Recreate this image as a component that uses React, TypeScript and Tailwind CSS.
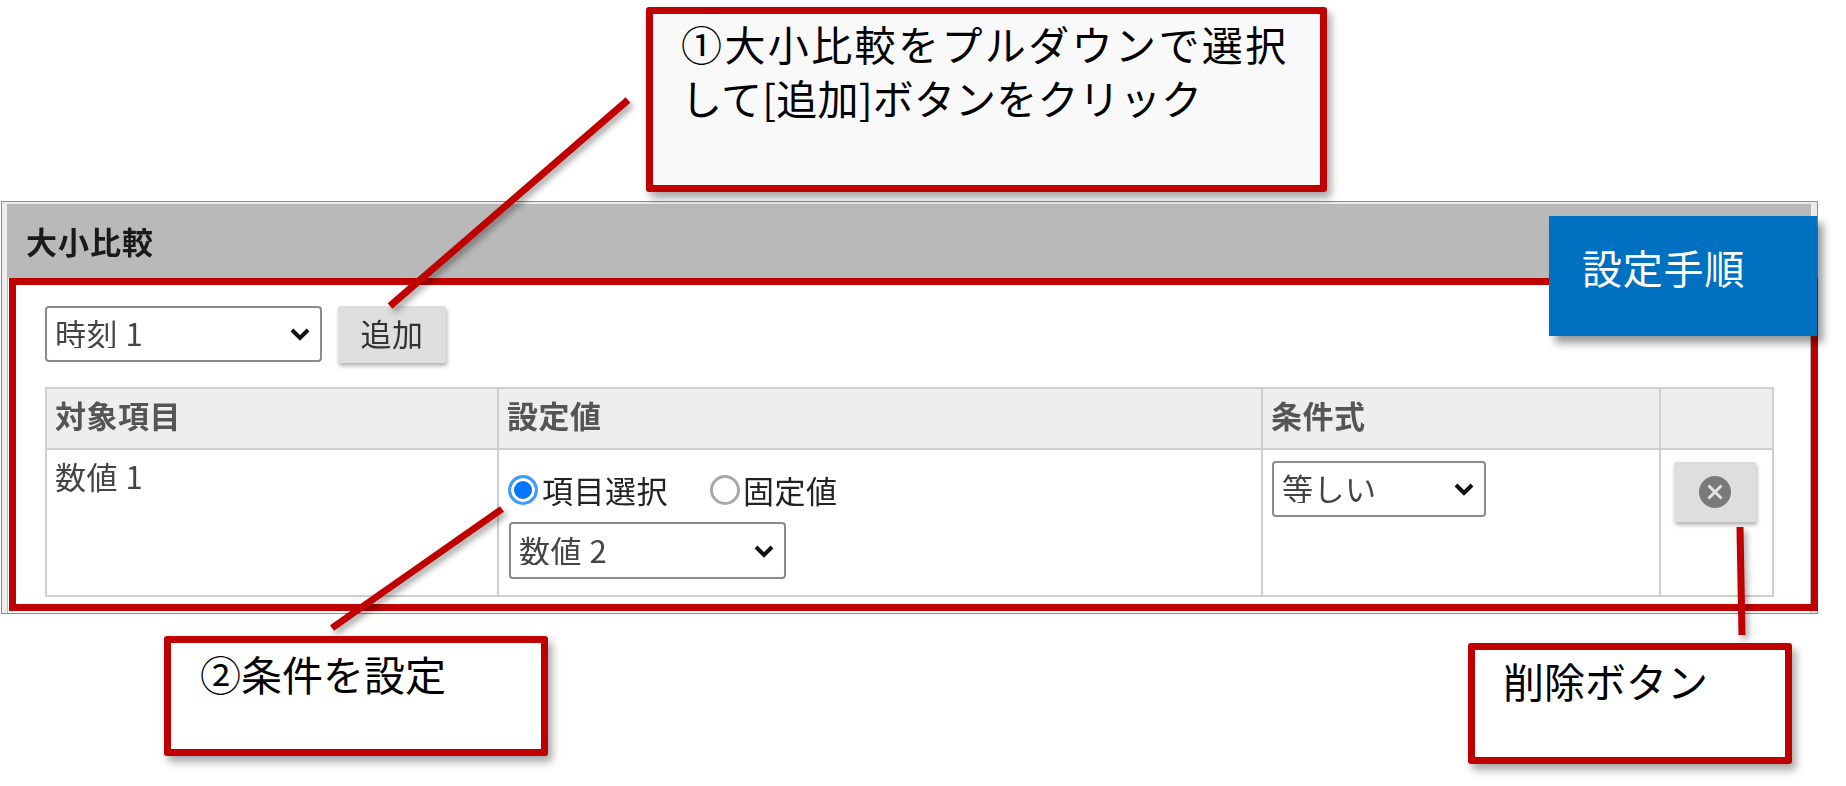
// Annotated manual figure: the 大小比較 settings panel with red callouts on top.
import type { ReactNode } from 'react';

function Chevron() {
  return (
    <svg
      viewBox="0 0 20 14"
      className="absolute right-[12px] top-1/2 h-[14px] w-[20px] -translate-y-1/2 pointer-events-none"
    >
      <path d="M2 3 L10 11 L18 3" fill="none" stroke="#111" strokeWidth="4" />
    </svg>
  );
}

function Select({ value, className }: { value: string; className: string }) {
  return (
    <div className={`relative ${className}`}>
      <select
        defaultValue={value}
        className="h-full w-full appearance-none rounded-[4px] border-2 border-[#8a8a8a] bg-white pb-[3px] pl-[8px] text-[31px] leading-none tracking-[0.5px] text-[#444]"
      >
        <option>{value}</option>
      </select>
      <Chevron />
    </div>
  );
}

function Callout({ className, children }: { className: string; children: ReactNode }) {
  return (
    <div
      className={`absolute rounded-[3px] border-[7px] border-[#c00000] text-[41px] leading-[54px] text-black shadow-[4px_6px_8px_rgba(0,0,0,0.35)] ${className}`}
    >
      {children}
    </div>
  );
}

export default function App() {
  return (
    <div className="relative h-[786px] w-[1846px] overflow-hidden bg-white pl-px pt-[201px] font-['Noto_Sans_CJK_JP',sans-serif]">
      <section className="h-[413px] w-[1817px] border border-[#8c8c8c] bg-[#ececec] pl-[5px] pr-[6px] pt-[2px]">
        <div className="h-full border-x border-t border-[#b8b8b8] bg-white blur-[0.4px]">
          <h2 className="flex h-[73px] items-center bg-[#b9b9b9] pl-[18px] text-[31px] font-bold tracking-[1px] text-[#1a1a1a]">
            大小比較
          </h2>
          <div className="pl-[37px] pt-[28px]">
            <div className="flex items-start gap-[16px]">
              <Select value="時刻 1" className="h-[56px] w-[277px]" />
              <button className="h-[57px] w-[108px] rounded-[2px] bg-[#dedede] pb-[3px] text-[31px] tracking-[0.5px] text-[#333] shadow-[1px_3px_4px_rgba(0,0,0,0.3)]">
                追加
              </button>
            </div>
            <table className="mt-[24px] w-[1727px] table-fixed border-collapse text-[31px] tracking-[0.5px] text-[#444]">
              <colgroup>
                <col className="w-[452px]" />
                <col className="w-[764px]" />
                <col className="w-[398px]" />
                <col className="w-[113px]" />
              </colgroup>
              <thead>
                <tr className="h-[61px] bg-[#eeeeee] text-left text-[#555]">
                  <th className="border-2 border-[#cfcfcf] pb-[6px] pl-[8px] font-bold">対象項目</th>
                  <th className="border-2 border-[#cfcfcf] pb-[6px] pl-[8px] font-bold">設定値</th>
                  <th className="border-2 border-[#cfcfcf] pb-[6px] pl-[8px] font-bold">条件式</th>
                  <th className="border-2 border-[#cfcfcf]"></th>
                </tr>
              </thead>
              <tbody>
                <tr className="h-[147px] align-top">
                  <td className="border-2 border-[#cfcfcf] pl-[8px] pt-[3px]">数値 1</td>
                  <td className="border-2 border-[#cfcfcf] pl-[9px] pt-[23px]">
                    <div className="flex h-[34px] items-center text-[#222]">
                      <input
                        type="radio"
                        name="kind"
                        defaultChecked
                        className="m-0 h-[30px] w-[30px] appearance-none rounded-full border-[3px] border-[#3f9bff] bg-[#0075ff] shadow-[inset_0_0_0_3px_white]"
                      />
                      <span className="ml-[4px]">項目選択</span>
                      <input
                        type="radio"
                        name="kind"
                        className="m-0 ml-[42px] h-[30px] w-[30px] appearance-none rounded-full border-[3px] border-[#a8a8a8] bg-white"
                      />
                      <span className="ml-[3px]">固定値</span>
                    </div>
                    <Select value="数値 2" className="ml-px mt-[15px] h-[57px] w-[277px]" />
                  </td>
                  <td className="border-2 border-[#cfcfcf] pl-[9px] pt-[11px]">
                    <Select value="等しい" className="h-[56px] w-[214px]" />
                  </td>
                  <td className="border-2 border-[#cfcfcf] pl-[13px] pt-[12px]">
                    <button className="flex h-[60px] w-[82px] items-center justify-center rounded-[2px] bg-[#dedede] shadow-[1px_3px_4px_rgba(0,0,0,0.3)]">
                      <svg viewBox="0 0 32 32" className="h-[32px] w-[32px]">
                        <circle cx="16" cy="16" r="16" fill="#7a7a7a" />
                        <path d="M9.5 9.5 L22.5 22.5 M22.5 9.5 L9.5 22.5" stroke="#e4e4e4" strokeWidth="3" />
                      </svg>
                    </button>
                  </td>
                </tr>
              </tbody>
            </table>
          </div>
        </div>
      </section>

      {/* annotation layer */}
      <div className="absolute left-[9px] top-[278px] h-[333px] w-[1809px] border-[7px] border-[#c00000]" />

      <svg
        viewBox="0 0 1846 786"
        className="absolute left-0 top-0 h-[786px] w-[1846px] drop-shadow-[3px_4px_3px_rgba(0,0,0,0.35)]"
      >
        <g stroke="#c00000" strokeWidth="7">
          <line x1="628" y1="100" x2="390" y2="306" />
          <line x1="502" y1="509" x2="332" y2="628" />
          <line x1="1740" y1="527" x2="1742" y2="635" />
        </g>
      </svg>

      <Callout className="left-[646px] top-[7px] h-[185px] w-[681px] bg-[#f9f9f9] pl-[28px] pt-[2px]">
        <span className="tracking-[2.4px]">①大小比較をプルダウンで選択</span>
        <br />
        <span className="tracking-[0.2px]">して[追加]ボタンをクリック</span>
      </Callout>
      <Callout className="left-[164px] top-[636px] h-[120px] w-[384px] bg-white pl-[29px] pt-[3px]">
        ②条件を設定
      </Callout>
      <Callout className="left-[1468px] top-[643px] h-[121px] w-[324px] bg-white pl-[28px] pt-[3px]">
        削除ボタン
      </Callout>

      <div className="absolute left-[1549px] top-[216px] h-[120px] w-[268px] bg-[#0070c0] pl-[33px] pt-[24px] text-[40px] leading-[55px] tracking-[0.8px] text-white shadow-[6px_7px_8px_rgba(0,0,0,0.4)]">
        設定手順
      </div>
    </div>
  );
}
